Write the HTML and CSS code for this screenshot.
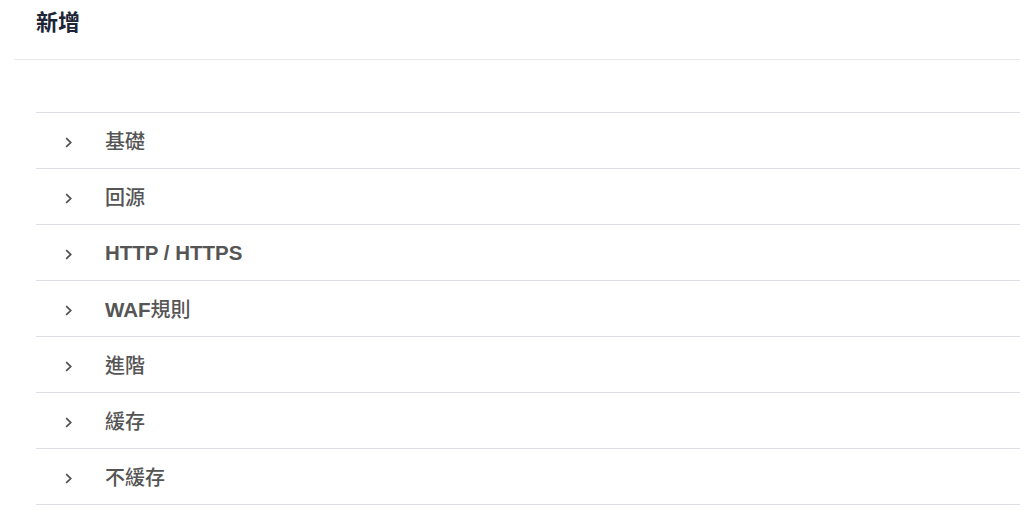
FILE: index.html
```html
<!DOCTYPE html>
<html lang="zh-Hant">
<head>
<meta charset="utf-8">
<link rel="stylesheet" href="styles.css">
</head>
<body>
<div class="page">
  <div class="header"><h1 class="title">新增</h1></div>
  <div class="content">
    <div class="collapse">
      <div class="item"><span class="arrow"><svg width="8" height="11" viewBox="0 0 8 11"><path d="M1.2 1.2 L5.7 5.5 L1.2 9.8" fill="none" stroke="#4d4d4d" stroke-width="1.7"/></svg></span><span class="label">基礎</span></div>
      <div class="item"><span class="arrow"><svg width="8" height="11" viewBox="0 0 8 11"><path d="M1.2 1.2 L5.7 5.5 L1.2 9.8" fill="none" stroke="#4d4d4d" stroke-width="1.7"/></svg></span><span class="label">回源</span></div>
      <div class="item"><span class="arrow"><svg width="8" height="11" viewBox="0 0 8 11"><path d="M1.2 1.2 L5.7 5.5 L1.2 9.8" fill="none" stroke="#4d4d4d" stroke-width="1.7"/></svg></span><span class="label"><b class="latin">HTTP / HTTPS</b></span></div>
      <div class="item"><span class="arrow"><svg width="8" height="11" viewBox="0 0 8 11"><path d="M1.2 1.2 L5.7 5.5 L1.2 9.8" fill="none" stroke="#4d4d4d" stroke-width="1.7"/></svg></span><span class="label"><b class="latin">WAF</b>規則</span></div>
      <div class="item"><span class="arrow"><svg width="8" height="11" viewBox="0 0 8 11"><path d="M1.2 1.2 L5.7 5.5 L1.2 9.8" fill="none" stroke="#4d4d4d" stroke-width="1.7"/></svg></span><span class="label">進階</span></div>
      <div class="item"><span class="arrow"><svg width="8" height="11" viewBox="0 0 8 11"><path d="M1.2 1.2 L5.7 5.5 L1.2 9.8" fill="none" stroke="#4d4d4d" stroke-width="1.7"/></svg></span><span class="label">緩存</span></div>
      <div class="item"><span class="arrow"><svg width="8" height="11" viewBox="0 0 8 11"><path d="M1.2 1.2 L5.7 5.5 L1.2 9.8" fill="none" stroke="#4d4d4d" stroke-width="1.7"/></svg></span><span class="label">不緩存</span></div>
    </div>
  </div>
</div>
</body>
</html>
```

FILE: styles.css
```css
html, body {
  margin: 0;
  padding: 0;
  background: #ffffff;
  font-family: "Liberation Sans", "Noto Sans CJK TC", sans-serif;
}
.page {
  padding: 0 4px 0 14px;
}
.header {
  height: 59px;
  border-bottom: 1px solid #e6e8ec;
  padding: 0 22px;
  display: flex;
  align-items: center;
}
.title {
  margin: 0 0 14px 0;
  font-size: 22px;
  font-weight: 700;
  color: #1e2536;
  line-height: 24px;
}
.content {
  padding: 52px 0 0 22px;
}
.collapse {
  border-top: 1px solid #dcdee3;
}
.item {
  height: 55px;
  border-bottom: 1px solid #dcdee3;
  display: flex;
  align-items: center;
}
.arrow {
  width: 40px;
  padding-left: 29px;
  padding-top: 4px;
  display: flex;
  align-items: center;
}
.label {
  font-size: 20px;
  font-weight: 500;
  color: #555555;
}
.latin {
  font-weight: 700;
  font-size: 20.5px;
}
```
